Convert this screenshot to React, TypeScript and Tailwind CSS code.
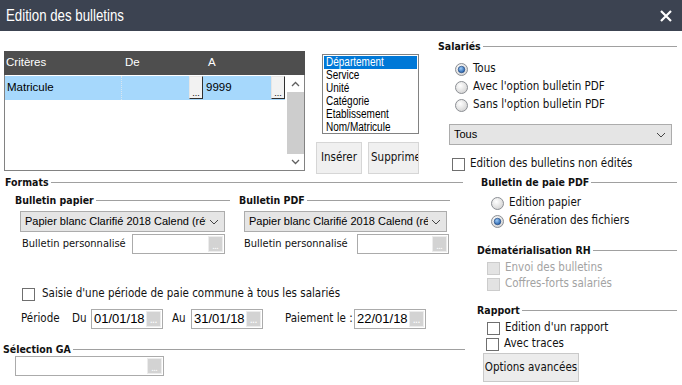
import React from "react";

const tah = "font-['DejaVu_Sans_Condensed','DejaVu_Sans',sans-serif] text-[11.5px] text-[#111]";
const tahSmall = "font-['DejaVu_Sans_Condensed','DejaVu_Sans',sans-serif] text-[11px] text-[#111]";
const tahBold = "font-['DejaVu_Sans_Condensed','DejaVu_Sans',sans-serif] text-[10.5px] font-bold text-[#111]";
const arial = "font-['Liberation_Sans',Arial,sans-serif]";

const GroupTitle = ({ label, className = "" }: any) => (
  <div className={`flex items-center h-[12px] ${className}`}>
    <span className={`${tahBold} leading-none whitespace-nowrap`}>{label}</span>
    <div className="flex-1 h-px bg-[#a0a0a0] ml-[2px]" />
  </div>
);

const Radio = ({ checked, label }: any) => (
  <div className="flex items-center h-[18px]">
    <svg width="13" height="13" viewBox="0 0 13 13">
      <defs>
        <radialGradient id="rOff" cx="40%" cy="35%" r="70%">
          <stop offset="0" stopColor="#ffffff" />
          <stop offset="1" stopColor="#d2d2d2" />
        </radialGradient>
        <radialGradient id="rDot" cx="40%" cy="35%" r="70%">
          <stop offset="0" stopColor="#9ccbf7" />
          <stop offset="1" stopColor="#1a55a3" />
        </radialGradient>
      </defs>
      <circle cx="6.5" cy="6.5" r="6" fill="url(#rOff)" stroke="#8c8f94" />
      {checked && <circle cx="6.5" cy="6.5" r="3.3" fill="url(#rDot)" stroke="#1d3f73" strokeWidth="0.6" />}
    </svg>
    <span className={`${tah} ml-[5px] leading-none`}>{label}</span>
  </div>
);

const Check = ({ label, disabled, gap = "ml-[5px]", className = "" }: any) => (
  <div className={`flex items-center h-[16px] ${className}`}>
    <div
      className={`w-[13px] h-[13px] border ${
        disabled ? "bg-[#e3e3e3] border-[#cccccc]" : "bg-white border-[#6f6f6f]"
      }`}
    />
    <span className={`${tah} ${gap} leading-none whitespace-nowrap ${disabled ? "text-[#a3a3a3]" : ""}`}>{label}</span>
  </div>
);

const Dots = () => (
  <div className="w-[15px] h-full bg-[#d3d3d3] border border-[#ececec] flex items-end justify-center">
    <span className="text-[7px] leading-[9px] text-white font-bold">...</span>
  </div>
);

const BrowseInput = ({ w, value = "", big }: any) => (
  <div className={`${w} h-[20px] border border-[#ababab] bg-white flex items-stretch shrink-0`}>
    <span className={`${arial} ${big ? "text-[13px]" : "text-[12px]"} flex-1 pl-[2px] leading-[17px] text-black whitespace-nowrap overflow-hidden`}>
      {value}
    </span>
    <div className="p-px">
      <Dots />
    </div>
  </div>
);

const Select = ({ w, value }: any) => (
  <div className={`${w} h-[21px] bg-[#e5e5e5] border border-[#acacac] flex items-center`}>
    <span className={`${arial} text-[11px] text-black pl-[4px] flex-1 whitespace-nowrap overflow-hidden`}>{value}</span>
    <svg width="18" height="10" viewBox="0 0 18 10" className="shrink-0">
      <polyline points="4,3 8,7 12,3" fill="none" stroke="#444" strokeWidth="1" />
    </svg>
  </div>
);

const GridBtn = () => (
  <div className="w-[14px] h-[23px] bg-[#f2f2f2] border-l border-t border-[#e6e6e6] border-r border-b border-r-[#303030] border-b-[#303030] flex items-end justify-center">
    <span className="text-[9px] leading-[10px] text-black">...</span>
  </div>
);

const CriteriaGrid = () => (
  <div className="w-[301px] h-[120px] mt-[20px] ml-[4px] border border-[#828282] border-t-0 flex flex-col">
    <div className={`h-[24px] bg-[#4e4e4e] flex items-center text-white text-[11.5px] ${arial} -mx-px`}>
      <span className="w-[118px] pl-[2px]">Critères</span>
      <span className="w-[82px] pl-[3px]">De</span>
      <span className="pl-[4px]">A</span>
    </div>
    <div className="flex flex-1 mt-px">
      <div className="flex-1">
        <div className={`h-[24px] bg-[#a6d8fc] flex ${arial} text-[11.5px] text-black`}>
          <span className="w-[117px] pl-[2px] pt-[3px] border-r border-dotted border-[#d8e6f0]">Matricule</span>
          <div className="w-[81px] flex justify-end items-start">
            <GridBtn />
          </div>
          <div className="flex-1 flex justify-between items-start">
            <span className="pl-[3px] pt-[3px]">9999</span>
            <GridBtn />
          </div>
        </div>
      </div>
      <div className="w-[17px] ml-[2px] flex flex-col">
        <div className="h-[16px] flex items-center justify-center">
          <svg width="9" height="6" viewBox="0 0 9 6">
            <polyline points="1,5 4.5,1.5 8,5" fill="none" stroke="#606060" strokeWidth="1.3" />
          </svg>
        </div>
        <div className="flex-1 bg-[#cdcdcd]" />
        <div className="h-[16px] flex items-center justify-center">
          <svg width="9" height="6" viewBox="0 0 9 6">
            <polyline points="1,1 4.5,4.5 8,1" fill="none" stroke="#606060" strokeWidth="1.3" />
          </svg>
        </div>
      </div>
    </div>
  </div>
);

const criteres = ["Département", "Service", "Unité", "Catégorie", "Etablissement", "Nom/Matricule"];

const CriteriaList = () => (
  <div className="ml-[11px] mt-[23px] w-[103px]">
    <div className="ml-[6px] w-[97px] h-[80px] border border-[#828282] bg-white p-px">
      {criteres.map((c, i) => (
        <div
          key={c}
          className={`${arial} text-[12.5px] h-[13px] leading-[13px] pl-[2px] overflow-hidden whitespace-nowrap ${
            i === 0 ? "bg-[#0078d7] text-white" : "text-black"
          }`}
        >
          <span className="inline-block origin-left scale-x-[0.8]">{c}</span>
        </div>
      ))}
    </div>
    <div className="flex gap-[6px] mt-[8px]">
      <button className={`${tah} w-[46px] h-[32px] bg-[#f0f0f0] border border-[#d6d6d6] text-[#1b1b3a]`}>
        Insérer
      </button>
      <button
        className={`${tah} w-[51px] h-[32px] bg-[#f0f0f0] border border-[#d6d6d6] text-[#1b1b3a] text-left pl-[2px] whitespace-nowrap overflow-hidden`}
      >
        Supprimer
      </button>
    </div>
  </div>
);

const Salaries = () => (
  <div className="ml-[19px] mt-[9px] w-[239px]">
    <GroupTitle label="Salariés" />
    <div className="ml-[17px] mt-[8px]">
      <Radio checked label="Tous" />
      <Radio label="Avec l'option bulletin PDF" />
      <Radio label="Sans l'option bulletin PDF" />
    </div>
    <div className="ml-[11px] mt-[10px]">
      <Select w="w-[223px]" value="Tous" />
    </div>
    <Check className="ml-[14px] mt-[11px]" label="Edition des bulletins non édités" />
  </div>
);

const Formats = () => (
  <div className="w-[465px] shrink-0">
    <GroupTitle label="Formats" className="ml-[5px] mt-[2px] mr-[2px]" />
    <div className="flex mt-[6px]">
      <div className="ml-[15px] w-[215px]">
        <GroupTitle label="Bulletin papier" />
        <div className="ml-[5px] mt-[5px]">
          <Select w="w-[205px]" value="Papier blanc Clarifié 2018 Calend (réf 9" />
          <div className="flex items-center mt-[2px] ml-[2px]">
            <span className={`${tahSmall} w-[110px] whitespace-nowrap`}>Bulletin personnalisé</span>
            <BrowseInput w="w-[93px]" />
          </div>
        </div>
      </div>
      <div className="ml-[9px] w-[211px]">
        <GroupTitle label="Bulletin PDF" />
        <div className="ml-[5px] mt-[5px]">
          <Select w="w-[203px]" value="Papier blanc Clarifié 2018 Calend (réf 9" />
          <div className="flex items-center mt-[2px]">
            <span className={`${tahSmall} w-[113px] whitespace-nowrap`}>Bulletin personnalisé</span>
            <BrowseInput w="w-[92px]" />
          </div>
        </div>
      </div>
    </div>
    <Check className="ml-[22px] mt-[32px]" gap="ml-[7px]" label="Saisie d'une période de paie commune à tous les salariés" />
    <div className={`${tah} flex items-center mt-[7px] ml-[21px]`}>
      <span className="w-[51px]">Période</span>
      <span className="w-[19px]">Du</span>
      <BrowseInput w="w-[72px]" value="01/01/18" big />
      <span className="ml-[9px] w-[19px]">Au</span>
      <BrowseInput w="w-[72px]" value="31/01/18" big />
      <span className="ml-[22px] w-[69px] whitespace-nowrap">Paiement le :</span>
      <BrowseInput w="w-[72px]" value="22/01/18" big />
    </div>
    <GroupTitle label="Sélection GA" className="ml-[3px] mt-[14px]" />
    <div className="ml-[15px] mt-px">
      <BrowseInput w="w-[149px]" />
    </div>
  </div>
);

const RightPanel = () => (
  <div className="ml-[12px] w-[200px]">
    <GroupTitle label="Bulletin de paie PDF" className="ml-[4px] mt-[2px]" />
    <div className="ml-[14px] mt-[6px]">
      <Radio label="Edition papier" />
      <Radio checked label="Génération des fichiers" />
    </div>
    <GroupTitle label="Dématérialisation RH" className="mt-[14px]" />
    <div className="ml-[10px] mt-[4px]">
      <Check disabled label="Envoi des bulletins" />
      <Check disabled label="Coffres-forts salariés" />
    </div>
    <GroupTitle label="Rapport" className="mt-[12px]" />
    <div className="ml-[10px] mt-[4px]">
      <Check label="Edition d'un rapport" />
      <Check label="Avec traces" className="-ml-px" />
    </div>
    <button className={`${tah} ml-[6px] mt-px w-[96px] h-[29px] bg-[#ececec] border border-[#c9c9c9]`}>
      Options avancées
    </button>
  </div>
);

export default function App() {
  return (
    <div className="w-[682px] h-[385px] bg-white overflow-hidden flex flex-col">
      <div className="h-[31px] bg-[#3c4351] flex items-center justify-between px-[6px] shrink-0">
        <span className={`${arial} text-[17px] text-white inline-block origin-left scale-x-[0.78] whitespace-nowrap`}>
          Edition des bulletins
        </span>
        <svg width="12" height="12" viewBox="0 0 12 12" className="mr-[4px]">
          <path d="M1 1 L11 11 M11 1 L1 11" stroke="#ffffff" strokeWidth="2.2" />
        </svg>
      </div>
      <div className="flex h-[143px] shrink-0">
        <CriteriaGrid />
        <CriteriaList />
        <Salaries />
      </div>
      <div className="flex">
        <Formats />
        <RightPanel />
      </div>
    </div>
  );
}
